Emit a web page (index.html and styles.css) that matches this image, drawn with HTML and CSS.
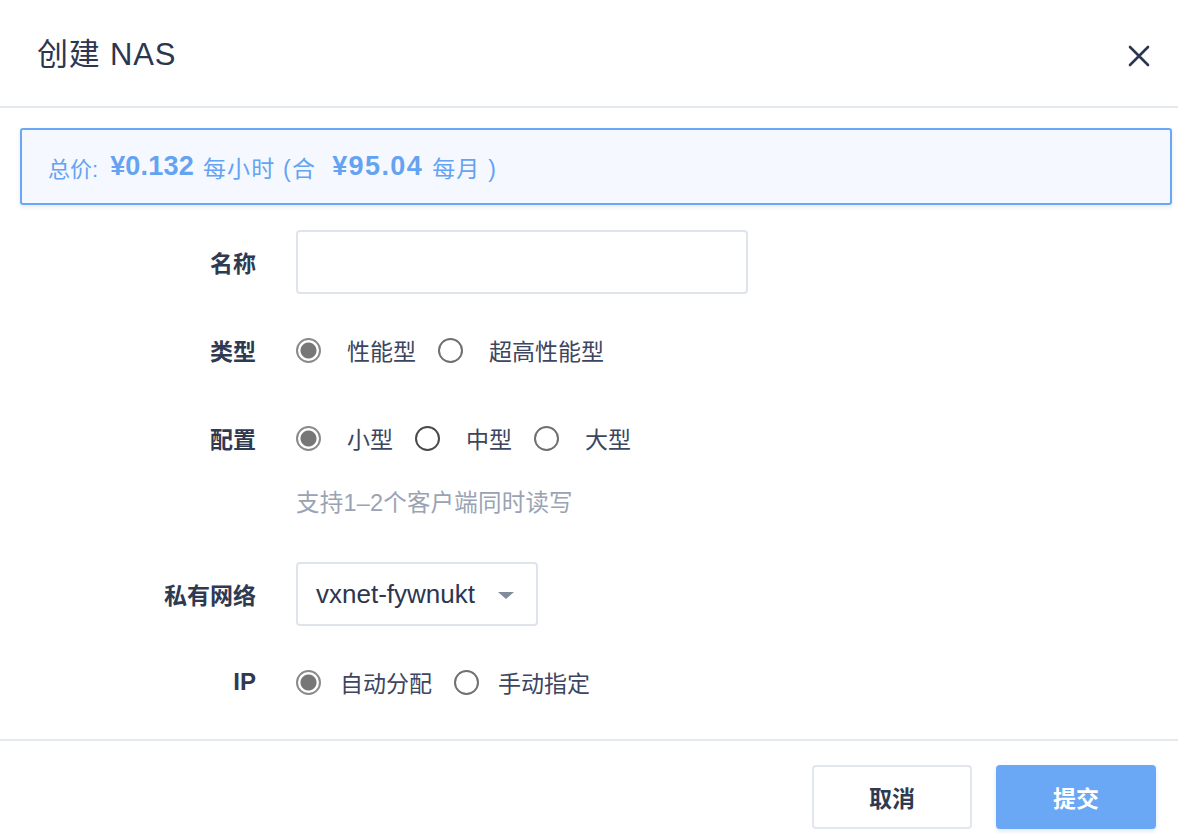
FILE: index.html
```html
<!DOCTYPE html>
<html lang="zh">
<head>
<meta charset="utf-8">
<title>创建 NAS</title>
<link rel="stylesheet" href="styles.css">
</head>
<body>
<div class="modal">
  <header class="modal-header">
    <h1 class="modal-title">创建 NAS</h1>
    <button class="close-btn" aria-label="关闭">
      <svg width="22" height="22" viewBox="0 0 22 22"><path d="M2 2 L20 20 M20 2 L2 20" stroke="#2c3650" stroke-width="2.6" stroke-linecap="round"/></svg>
    </button>
  </header>

  <div class="price-bar">
    <span class="price-label">总价:</span>
    <span class="price-num">¥0.132</span>
    <span class="price-unit">每小时 (合</span>
    <span class="price-num price-month">¥95.04</span>
    <span class="price-unit">每月 )</span>
  </div>

  <form class="form">
    <div class="row">
      <label class="label">名称</label>
      <input class="text-input" type="text">
    </div>

    <div class="row">
      <span class="label">类型</span>
      <div class="radios">
        <span class="radio checked"></span><span class="radio-text">性能型</span>
        <span class="radio"></span><span class="radio-text">超高性能型</span>
      </div>
    </div>

    <div class="row">
      <span class="label">配置</span>
      <div class="radios">
        <span class="radio checked"></span><span class="radio-text">小型</span>
        <span class="radio dark"></span><span class="radio-text">中型</span>
        <span class="radio"></span><span class="radio-text">大型</span>
      </div>
    </div>
    <div class="help">支持1–2个客户端同时读写</div>

    <div class="row">
      <span class="label">私有网络</span>
      <div class="select">
        <span class="select-value">vxnet-fywnukt</span>
        <span class="caret"></span>
      </div>
    </div>

    <div class="row">
      <span class="label label-ip">IP</span>
      <div class="radios tight">
        <span class="radio checked"></span><span class="radio-text">自动分配</span>
        <span class="radio"></span><span class="radio-text">手动指定</span>
      </div>
    </div>
  </form>

  <footer class="modal-footer">
    <button class="btn btn-default" type="button">取消</button>
    <button class="btn btn-primary" type="button">提交</button>
  </footer>
</div>
</body>
</html>
```

FILE: styles.css
```css
* { box-sizing: border-box; }
html, body {
  margin: 0;
  padding: 0;
  background: #fff;
  font-family: "Liberation Sans", "Noto Sans CJK SC", sans-serif;
  color: #2c3650;
}
.modal { width: 1178px; height: 834px; overflow: hidden; }

.modal-header {
  height: 108px;
  display: flex;
  align-items: center;
  justify-content: space-between;
  padding: 0 28px 0 37px;
  border-bottom: 2px solid #e5e9f0;
}
.modal-title {
  margin: 0;
  margin-top: -4px;
  font-size: 31px;
  font-weight: normal;
  color: #2c3650;
  letter-spacing: 0.8px;
}
.close-btn {
  border: 0;
  background: none;
  padding: 0;
  width: 22px;
  height: 22px;
  margin-top: 6px;
  cursor: pointer;
}

.price-bar {
  margin: 20px 6px 0 20px;
  height: 77px;
  border: 2px solid #6aa8f5;
  border-radius: 3px;
  background: #f5f8fe;
  box-shadow: 0 2px 4px rgba(80, 100, 140, 0.15);
  display: flex;
  align-items: center;
  padding-left: 26px;
  color: #64a3f2;
  white-space: pre;
}
.price-label { font-size: 22px; margin-right: 12px; }
.price-num { font-size: 27px; font-weight: bold; margin-right: 9px; letter-spacing: 0.2px; }
.price-unit { font-size: 23px; letter-spacing: 1.2px; }
.price-month { margin-left: 16px; letter-spacing: 1.4px; }

.form {
  display: flex;
  flex-direction: column;
  margin-top: 25px;
}
.row {
  display: flex;
  align-items: center;
  min-height: 64px;
  margin-bottom: 24px;
}
.label {
  width: 256px;
  text-align: right;
  font-size: 23px;
  font-weight: bold;
  color: #2f3a52;
  margin-right: 40px;
}
.label-ip { font-size: 24px; }
.text-input {
  width: 452px;
  height: 64px;
  border: 2px solid #dfe4ec;
  border-radius: 4px;
  background: #fff;
  outline: none;
  font-size: 20px;
  padding: 0 16px;
}
.radios {
  display: flex;
  align-items: center;
}
.radio {
  width: 25px;
  height: 25px;
  border-radius: 50%;
  border: 2px solid #707070;
  background: #fff;
  margin-right: 26px;
  flex: none;
}
.radio.dark { border-color: #4a4a4a; }
.radio.checked {
  border-color: #8a8a8a;
  background: radial-gradient(circle, #777 0, #777 7.5px, #fff 8.5px);
}
.radio-text {
  font-size: 23px;
  color: #3c4660;
  margin-right: 22px;
}
.radios.tight .radio { margin-right: 19px; }

.help {
  margin: -6px 0 44px 296px;
  font-size: 23.5px;
  line-height: 30px;
  color: #9aa3b3;
  letter-spacing: 0.2px;
}

.select {
  width: 242px;
  height: 64px;
  border: 2px solid #dfe4ec;
  border-radius: 4px;
  display: flex;
  align-items: center;
  justify-content: space-between;
  padding: 0 22px 0 18px;
}
.select-value {
  font-size: 26px;
  color: #2c3650;
}
.caret {
  width: 0;
  height: 0;
  border-left: 8px solid transparent;
  border-right: 8px solid transparent;
  border-top: 7px solid #848c9c;
  margin-top: 2px;
}

.modal-footer {
  margin-top: 1px;
  border-top: 2px solid #e5e9f0;
  display: flex;
  justify-content: flex-end;
  gap: 24px;
  padding: 24px 22px 0 0;
}
.btn {
  width: 160px;
  height: 64px;
  border-radius: 4px;
  font-family: "Liberation Sans", "Noto Sans CJK SC", sans-serif;
  font-size: 23px;
  font-weight: bold;
  cursor: pointer;
}
.btn-default {
  background: #fff;
  border: 2px solid #e2e7ee;
  color: #2f3a52;
}
.btn-primary {
  background: #6aa7f5;
  border: 0;
  color: #fff;
  box-shadow: 0 2px 4px rgba(106, 167, 245, 0.25);
}
```
